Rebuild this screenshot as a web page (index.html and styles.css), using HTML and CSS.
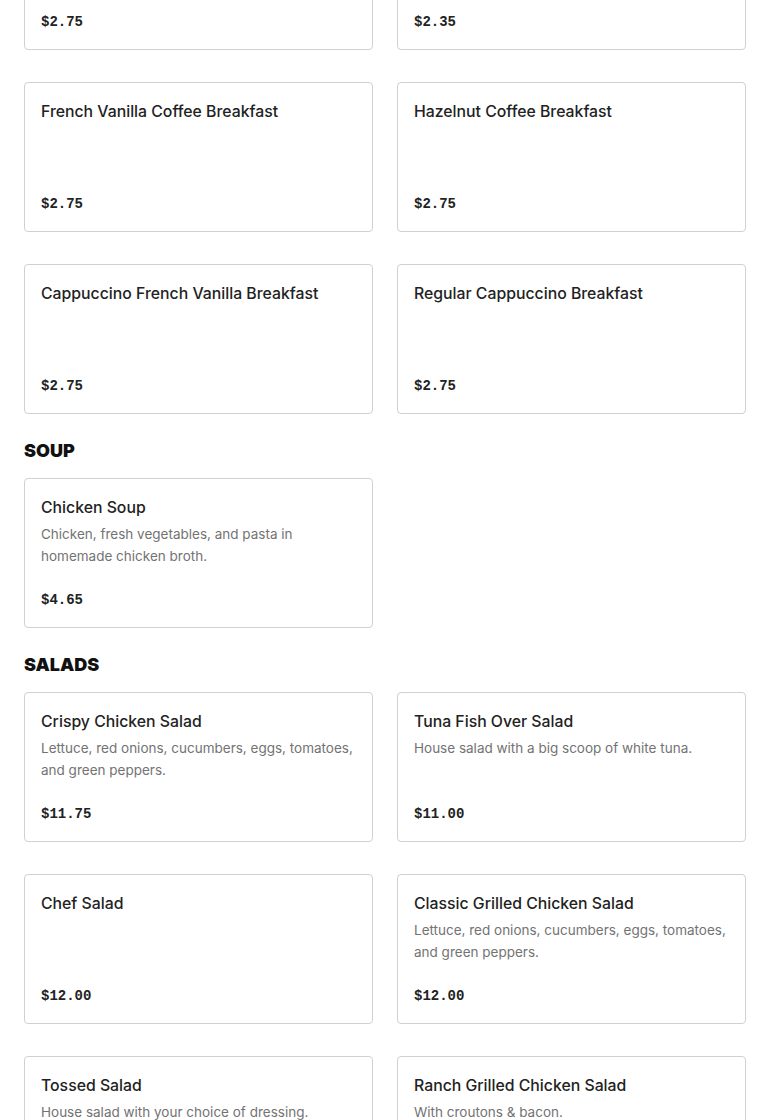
FILE: index.html
```html
<!DOCTYPE html>
<html>
<head>
<meta charset="utf-8">
<link rel="stylesheet" href="styles.css">
</head>
<body>
<main class="menu">
  <section class="section section-first">
    <div class="grid">
      <div class="card">
        <div class="title">Regular Coffee Breakfast</div>
        <div class="price">$2.75</div>
      </div>
      <div class="card">
        <div class="title">Tea Breakfast</div>
        <div class="price">$2.35</div>
      </div>
      <div class="card">
        <div class="title">French Vanilla Coffee Breakfast</div>
        <div class="price">$2.75</div>
      </div>
      <div class="card">
        <div class="title">Hazelnut Coffee Breakfast</div>
        <div class="price">$2.75</div>
      </div>
      <div class="card">
        <div class="title">Cappuccino French Vanilla Breakfast</div>
        <div class="price">$2.75</div>
      </div>
      <div class="card">
        <div class="title">Regular Cappuccino Breakfast</div>
        <div class="price">$2.75</div>
      </div>
    </div>
  </section>

  <section class="section">
    <h2 class="heading">SOUP</h2>
    <div class="grid">
      <div class="card">
        <div class="title">Chicken Soup</div>
        <div class="desc">Chicken, fresh vegetables, and pasta in homemade chicken broth.</div>
        <div class="price">$4.65</div>
      </div>
    </div>
  </section>

  <section class="section">
    <h2 class="heading">SALADS</h2>
    <div class="grid">
      <div class="card">
        <div class="title">Crispy Chicken Salad</div>
        <div class="desc">Lettuce, red onions, cucumbers, eggs, tomatoes, and green peppers.</div>
        <div class="price">$11.75</div>
      </div>
      <div class="card">
        <div class="title">Tuna Fish Over Salad</div>
        <div class="desc">House salad with a big scoop of white tuna.</div>
        <div class="price">$11.00</div>
      </div>
      <div class="card">
        <div class="title">Chef Salad</div>
        <div class="price">$12.00</div>
      </div>
      <div class="card">
        <div class="title">Classic Grilled Chicken Salad</div>
        <div class="desc">Lettuce, red onions, cucumbers, eggs, tomatoes, and green peppers.</div>
        <div class="price">$12.00</div>
      </div>
      <div class="card">
        <div class="title">Tossed Salad</div>
        <div class="desc">House salad with your choice of dressing.</div>
        <div class="price">$6.00</div>
      </div>
      <div class="card">
        <div class="title">Ranch Grilled Chicken Salad</div>
        <div class="desc">With croutons &amp; bacon.</div>
        <div class="price">$12.50</div>
      </div>
    </div>
  </section>
</main>
</body>
</html>
```

FILE: styles.css
```css
* { box-sizing: border-box; }
html, body { margin: 0; padding: 0; background: #fff; }
body { font-family: Inter, "Noto Sans", sans-serif; color: #222; }
.menu { padding: 0 24px; }
.section-first { margin-top: -100px; }
.heading {
  margin: 24px 0 15px;
  font-family: Inter, sans-serif;
  font-weight: 900;
  font-size: 18px;
  line-height: 25px;
  color: #111;
  letter-spacing: 0;
}
.grid {
  display: grid;
  grid-template-columns: 1fr 1fr;
  column-gap: 24px;
  row-gap: 32px;
}
.card {
  height: 150px;
  border: 1px solid #d0d0d0;
  border-radius: 4px;
  padding: 16px;
  display: flex;
  flex-direction: column;
}
.title {
  padding-top: 1px;
  font-size: 15.8px;
  line-height: 23px;
  font-weight: 500;
  color: #222;
}
.desc {
  margin-top: 4px;
  font-size: 13.5px;
  line-height: 22px;
  color: #737373;
}
.price {
  margin-top: auto;
  padding-top: 3px;
  font-family: "Liberation Mono", monospace;
  font-weight: 700;
  font-size: 14px;
  line-height: 21px;
  color: #222;
}
```
